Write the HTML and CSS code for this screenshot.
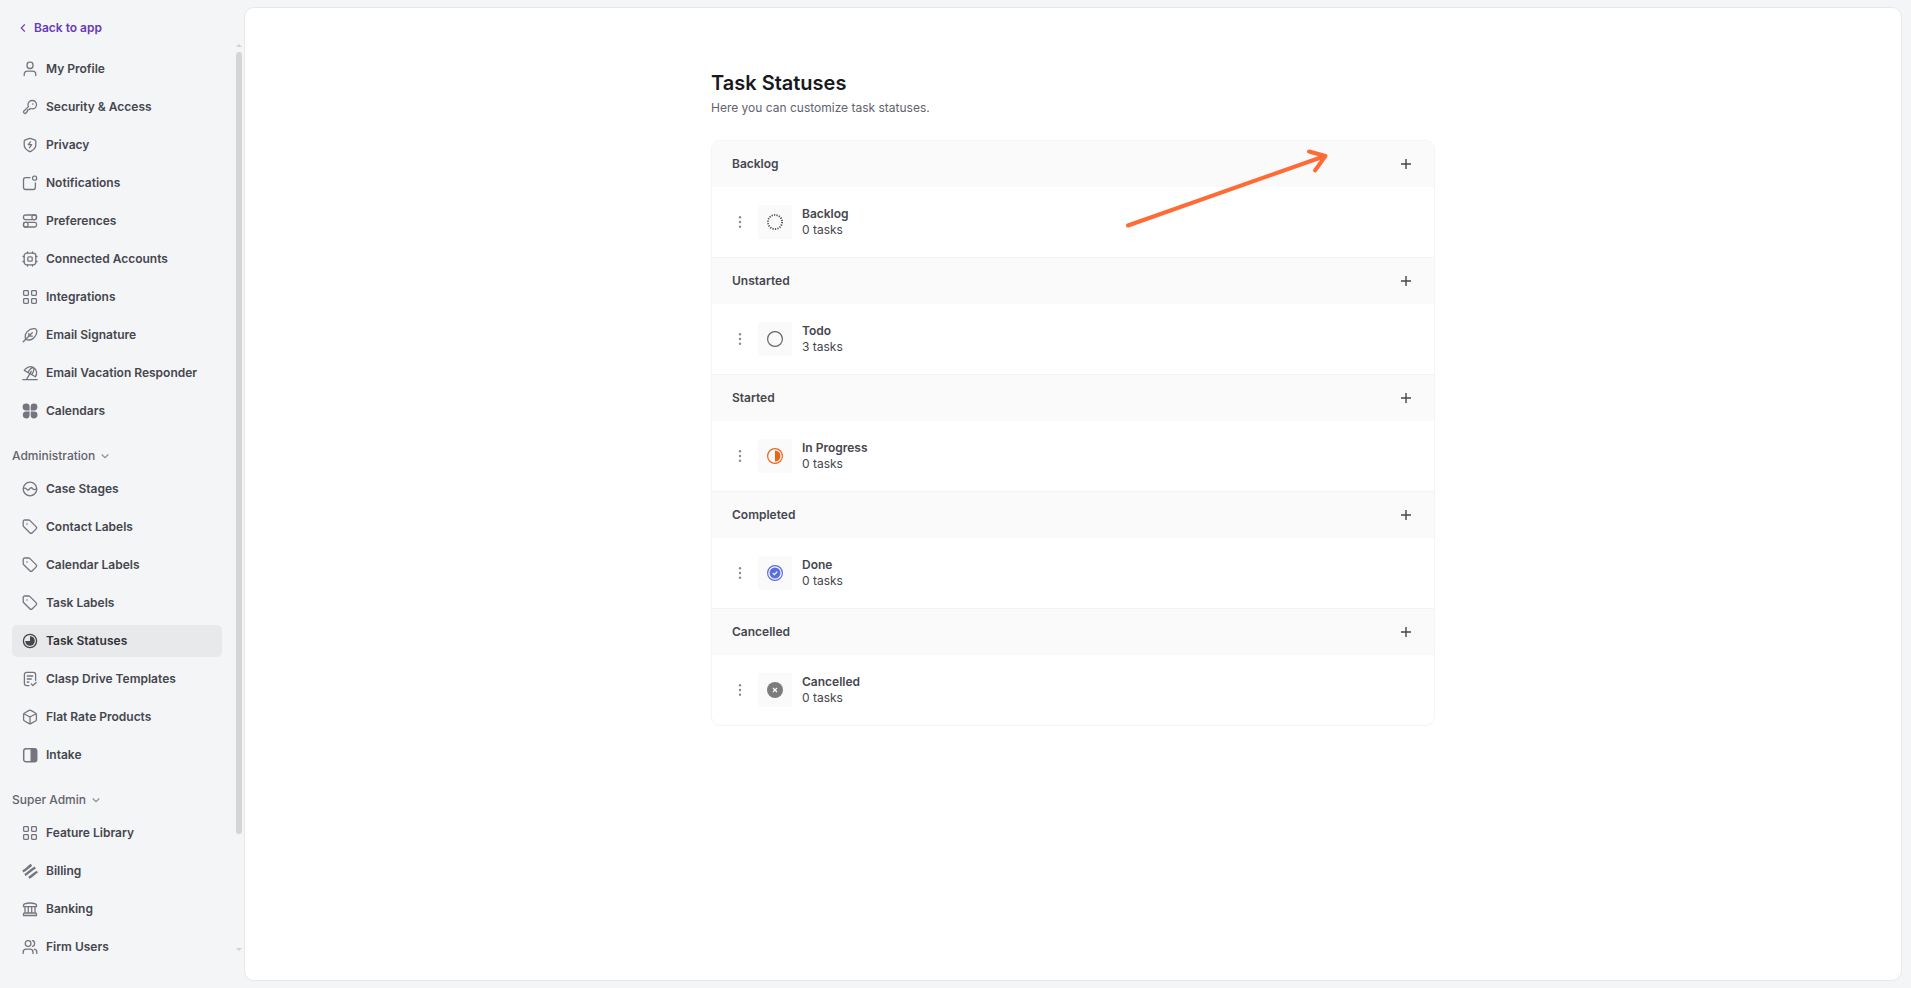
FILE: index.html
```
<!DOCTYPE html>
<html lang="en">
<head>
    <meta charset="UTF-8">
    <meta name="viewport" content="width=device-width, initial-scale=1.0">
    <title>Task Statuses</title>
    <link rel="stylesheet" href="styles.css">
</head>
<body>
    <svg class="sprite" width="0" height="0">
        <symbol id="tag" viewBox="0 0 16 16"><path d="M1.2 2.5v3.900c0 .5.2 1 .6 1.400l6 6c.8.8 1.700.8 2.500 0l3.700-3.700c.8-.8.8-1.700 0-2.500l-6-6C7.600 1.200 7.100 1 6.600 1H2.700c-.9 0-1.500.6-1.500 1.500z"/><path d="M5 5h.01" stroke-width="1.6"/></symbol>
        <symbol id="grid" viewBox="0 0 16 16"><rect x="1.6" y="1.6" width="4.800" height="4.800" rx=".8"/><rect x="9.600" y="1.6" width="4.800" height="4.800" rx=".8"/><rect x="1.6" y="9.600" width="4.800" height="4.800" rx=".8"/><rect x="9.600" y="9.600" width="4.800" height="4.800" rx=".8"/></symbol>
        <symbol id="plus" viewBox="0 0 12 12"><path d="M6 1v10M1 6h10"/></symbol>
        <symbol id="down" viewBox="0 0 8 8"><path d="M.7 2.500L4 5.700l3.300-3.200"/></symbol>
        <symbol id="dots" viewBox="0 0 4 14"><circle cx="2" cy="2.200" r="1.200"/><circle cx="2" cy="7" r="1.200"/><circle cx="2" cy="11.800" r="1.200"/></symbol>
    </svg>

    <aside class="sidebar">
        <a class="back"><svg viewBox="0 0 6 10"><path d="M4.800 1.300L1.300 5l3.500 3.700"/></svg>Back to app</a>

        <nav class="menu">
            <a class="item"><svg class="icon" viewBox="0 0 16 16"><rect x="5" y="1.200" width="6" height="6.300" rx="2.700"/><path d="M2.200 14.600v-1.200c0-2 1.500-3.200 3.400-3.200h4.800c1.900 0 3.400 1.200 3.400 3.200v1.200"/></svg>My Profile</a>
            <a class="item"><svg class="icon" viewBox="0 0 16 16"><path d="M10.200 1.500c2.400 0 4.300 1.800 4.300 4.200 0 2.300-1.900 4.200-4.300 4.200-.7 0-1.300-.1-1.900-.4l-1.200 1.200-1.500.3-.3 1.500-1.600 1.700c-.4.4-.9.4-1.300.1l-.7-.7c-.3-.4-.3-.9 0-1.300l4.800-4.700c-.3-.6-.5-1.200-.5-1.900 0-2.400 1.900-4.200 4.200-4.200z"/><path d="M10.800 5h.01" stroke-width="1.6"/></svg>Security &amp; Access</a>
            <a class="item"><svg class="icon" viewBox="0 0 16 16"><path d="M7 1.600L3.300 2.900c-.7.3-1.100.8-1.100 1.500v3.700c0 3.300 2.600 5 4.900 6.200.6.3 1.200.3 1.800 0 2.300-1.200 4.900-2.900 4.900-6.200V4.400c0-.7-.4-1.200-1.100-1.500L9 1.600c-.7-.2-1.300-.2-2 0z"/><path d="M8.500 4.900L6.300 7.700h3.400L7.500 10.700"/></svg>Privacy</a>
            <a class="item"><svg class="icon" viewBox="0 0 16 16"><rect x="10.600" y="1.200" width="4" height="4" rx="1.500"/><path d="M8 2.600H3.700c-1.300 0-2.200.9-2.200 2.200v7.500c0 1.300.9 2.200 2.200 2.200h7.500c1.300 0 2.200-.9 2.200-2.200V8"/></svg>Notifications</a>
            <a class="item"><svg class="icon" viewBox="0 0 16 16"><rect x="1.500" y="2" width="13" height="4.600" rx="1.800"/><rect x="1.500" y="9.400" width="13" height="4.600" rx="1.800"/><rect x="10" y="2" width="4.500" height="4.600" rx="1.500"/><rect x="1.500" y="9.400" width="4.500" height="4.600" rx="1.500"/></svg>Preferences</a>
            <a class="item"><svg class="icon" viewBox="0 0 16 16"><rect x="2.200" y="2.200" width="11.600" height="11.600" rx="2.500"/><rect x="5.800" y="5.800" width="4.400" height="4.400" rx="1"/><path d="M5.500 2V1M10.500 2V1M5.500 15v-1M10.500 15v-1M2 5.500H1M2 10.500H1M15 5.500h-1M15 10.500h-1"/></svg>Connected Accounts</a>
            <a class="item"><svg class="icon"><use href="#grid"/></svg>Integrations</a>
            <a class="item"><svg class="icon" viewBox="0 0 16 16"><path d="M1.200 14.800L10.300 5.700M3.700 12.300c-.9-2.800-.5-5.600 1.500-7.700 2.500-2.500 5.500-3.400 7.700-2.900 1 .2 1.500.8 1.700 1.700.5 2.200-.4 5.200-2.900 7.600-2.300 2.200-5.200 2.400-8 1.300zM6.800 9.200V6.500M6.800 9.200h3.500"/></svg>Email Signature</a>
            <a class="item"><svg class="icon" viewBox="0 0 16 16"><path d="M.8 14.700h14.400M4.700 14.200l4.600-7.900M2.300 5.400c1.800-3.300 5.900-4.800 9.300-2.800 3.300 1.900 3.900 6.200 1.800 9.200L2.300 5.400zM6 7.500c1.200-2.600 3.300-4.900 5.600-4.900M9.800 9.700c1.600-2.600 2.600-5.300 1.800-7.100"/></svg>Email Vacation Responder</a>
            <a class="item"><svg class="icon solid" viewBox="0 0 16 16"><path d="M4 .6h.4a3.200 3.200 0 0 1 3.200 3.200v3.600H4A3.400 3.400 0 0 1 4 .6zM12 .6a3.400 3.400 0 0 1 0 6.800H8.700V3.800A3.200 3.200 0 0 1 12 .6zM4 8.600h3.600v3.600A3.400 3.400 0 1 1 4 8.600zM8.700 8.600H12a3.400 3.400 0 1 1-3.300 3.600z"/></svg>Calendars</a>
        </nav>

        <div class="group">Administration<svg class="caret"><use href="#down"/></svg></div>
        <nav class="menu">
            <a class="item"><svg class="icon" viewBox="0 0 16 16"><circle cx="8" cy="8" r="6.800"/><path d="M1.500 7.500c1.200-.6 2.400-.4 3.300.8.9 1.100 1.700.8 2.400 0l.8-.9c.8-.9 1.800-.9 2.600.2.9 1.200 2.500 1.100 3.900.1"/></svg>Case Stages</a>
            <a class="item"><svg class="icon"><use href="#tag"/></svg>Contact Labels</a>
            <a class="item"><svg class="icon"><use href="#tag"/></svg>Calendar Labels</a>
            <a class="item"><svg class="icon"><use href="#tag"/></svg>Task Labels</a>
            <a class="item active"><svg class="icon" viewBox="0 0 16 16"><circle cx="8" cy="8" r="6.600"/><path class="fill" d="M8 3.200V8H3.200A4.800 4.800 0 1 0 8 3.200z"/></svg>Task Statuses</a>
            <a class="item"><svg class="icon" viewBox="0 0 16 16"><path d="M7 14.600H4.600c-1.300 0-2.200-.9-2.200-2.200V3.600c0-1.300.9-2.200 2.200-2.200h6.800c1.300 0 2.200.9 2.200 2.200v6M5.300 5h5.400M5.300 8h4M5.300 11h1.500M9.300 13l1.600 1.600 3.300-3"/></svg>Clasp Drive Templates</a>
            <a class="item"><svg class="icon" viewBox="0 0 16 16"><path d="M7.200 1.400L2.500 4c-.6.3-.9.8-.9 1.400v5.200c0 .6.3 1.100.9 1.400l4.700 2.600c.5.3 1.100.3 1.600 0l4.700-2.600c.6-.3.9-.8.9-1.400V5.400c0-.6-.3-1.100-.9-1.400L8.800 1.400c-.5-.3-1.100-.3-1.600 0zM2 4.700L8 8l6-3.300M8 8v6.700"/></svg>Flat Rate Products</a>
            <a class="item"><svg class="icon" viewBox="0 0 16 16"><rect x="1.700" y="1.700" width="13" height="13" rx="2.300" stroke-width="1.500"/><path class="fill" d="M8.500 1.500H13l2 1.500v10.500L13 15H8.500z"/></svg>Intake</a>
        </nav>

        <div class="group">Super Admin<svg class="caret"><use href="#down"/></svg></div>
        <nav class="menu">
            <a class="item"><svg class="icon"><use href="#grid"/></svg>Feature Library</a>
            <a class="item"><svg class="icon thick" viewBox="0 0 16 16"><path d="M.8 8.300C4 7.300 6 3.800 9.500 1.900M2.800 11.900C6.500 10.700 9 6.200 13.300 4.600M6.800 14.700c3.200-1.200 5-4.200 8.600-6"/></svg>Billing</a>
            <a class="item"><svg class="icon" viewBox="0 0 16 16"><path d="M1.500 4.400c0-.8.4-1.200 1.100-1.500 3.500-1.200 7.300-1.200 10.800 0 .7.3 1.100.7 1.100 1.500v1.300h-13zM2.500 12h11c.6 0 1 .5 1 1v1.500h-13V13c0-.5.4-1 1-1zM3 5.800V12M6.300 5.800V12M9.700 5.800V12M13 5.800V12"/></svg>Banking</a>
            <a class="item"><svg class="icon" viewBox="0 0 16 16"><rect x="3.300" y="1.700" width="5.600" height="5.600" rx="2.500"/><path d="M10.500 1.700c1.300.2 2.100 1.200 2.100 2.800s-.8 2.600-2.100 2.800M1.200 14.400v-1.200c0-1.800 1.300-3 3-3H8c1.700 0 3 1.200 3 3v1.200M12.300 10.200c1.500.4 2.500 1.500 2.500 3v1.200"/></svg>Firm Users</a>
        </nav>

        <div class="scrollbar">
            <span class="scroll-up"></span>
            <span class="scroll-thumb"></span>
            <span class="scroll-down"></span>
        </div>
    </aside>

    <main class="panel">
        <div class="content">
            <h1>Task Statuses</h1>
            <p class="subtitle">Here you can customize task statuses.</p>

            <div class="statuses">
                <section>
                    <div class="status-header">Backlog<svg class="plus"><use href="#plus"/></svg></div>
                    <div class="status-row">
                        <svg class="dots"><use href="#dots"/></svg>
                        <div class="status-icon"><svg viewBox="0 0 16 16"><circle cx="8" cy="8" r="7.100" fill="none" stroke="#555" stroke-width="1.800" stroke-dasharray="1.300 1.178"/></svg></div>
                        <div><div class="status-name">Backlog</div><div>0 tasks</div></div>
                    </div>
                </section>
                <section>
                    <div class="status-header">Unstarted<svg class="plus"><use href="#plus"/></svg></div>
                    <div class="status-row">
                        <svg class="dots"><use href="#dots"/></svg>
                        <div class="status-icon"><svg viewBox="0 0 16 16"><circle cx="8" cy="8" r="7.400" fill="none" stroke="#666" stroke-width="1.200"/></svg></div>
                        <div><div class="status-name">Todo</div><div>3 tasks</div></div>
                    </div>
                </section>
                <section>
                    <div class="status-header">Started<svg class="plus"><use href="#plus"/></svg></div>
                    <div class="status-row">
                        <svg class="dots"><use href="#dots"/></svg>
                        <div class="status-icon"><svg viewBox="0 0 16 16"><circle cx="8" cy="8" r="7.400" fill="none" stroke="#ec641c" stroke-width="1.200"/><path d="M8 2.500a5.500 5.500 0 0 1 0 11z" fill="#ec641c"/></svg></div>
                        <div><div class="status-name">In Progress</div><div>0 tasks</div></div>
                    </div>
                </section>
                <section>
                    <div class="status-header">Completed<svg class="plus"><use href="#plus"/></svg></div>
                    <div class="status-row">
                        <svg class="dots"><use href="#dots"/></svg>
                        <div class="status-icon"><svg viewBox="0 0 16 16"><circle cx="8" cy="8" r="7.400" fill="none" stroke="#5b6ee1" stroke-width="1.200"/><circle cx="8" cy="8" r="5.500" fill="#5b6ee1"/><path d="M5.800 8.100l1.500 1.500 3-3" fill="none" stroke="#fff" stroke-width="1.200"/></svg></div>
                        <div><div class="status-name">Done</div><div>0 tasks</div></div>
                    </div>
                </section>
                <section>
                    <div class="status-header">Cancelled<svg class="plus"><use href="#plus"/></svg></div>
                    <div class="status-row">
                        <svg class="dots"><use href="#dots"/></svg>
                        <div class="status-icon"><svg viewBox="0 0 16 16"><circle cx="8" cy="8" r="8" fill="#7c7c7c"/><path d="M6 6l4 4M10 6l-4 4" stroke="#fff" stroke-width="1.100"/></svg></div>
                        <div><div class="status-name">Cancelled</div><div>0 tasks</div></div>
                    </div>
                </section>

                <svg class="arrow" viewBox="0 0 208 84"><path d="M5 77.500L202 8M186 3.500L202.500 8 192 22.500"/></svg>
            </div>
        </div>
    </main>
</body>
</html>
```
FILE: styles.css
```
* {
    margin: 0;
    padding: 0;
    box-sizing: border-box;
}

body {
    font-family: Inter, "Liberation Sans", sans-serif;
    font-size: 12px;
    line-height: 16px;
    background: #f4f5f7;
    color: #45464e;
    height: 100vh;
    display: flex;
    overflow: hidden;
}

.sprite {
    position: absolute;
}

.sidebar {
    position: relative;
    width: 244px;
    flex: none;
    padding: 18px 22px 0 12px;
    overflow: hidden;
}

.back {
    display: flex;
    align-items: center;
    gap: 8px;
    height: 20px;
    padding-left: 8px;
    margin-bottom: 15px;
    color: #673ab7;
    font-weight: 600;
}

.back svg {
    width: 6px;
    height: 10px;
    fill: none;
    stroke: currentColor;
    stroke-width: 1.2;
}

.menu {
    display: flex;
    flex-direction: column;
    gap: 6px;
}

.item {
    display: flex;
    align-items: center;
    gap: 8px;
    width: 210px;
    height: 32px;
    padding-left: 10px;
    border-radius: 5px;
    font-weight: 600;
}

.item.active {
    background: #e8e9ea;
    color: #303138;
}

.icon {
    width: 16px;
    height: 16px;
    flex: none;
    fill: none;
    color: #74757e;
    stroke: currentColor;
    stroke-width: 1.3;
    stroke-linecap: round;
    stroke-linejoin: round;
}

.icon .fill,
.icon.solid {
    fill: currentColor;
    stroke: none;
}

.icon.thick {
    stroke-width: 2.4;
    stroke-linecap: butt;
}

.active .icon {
    color: #45464e;
}

.group {
    display: flex;
    align-items: center;
    gap: 6px;
    height: 20px;
    margin: 19px 0 7px;
    color: #62636c;
    font-weight: 500;
}

.caret {
    width: 8px;
    height: 8px;
    fill: none;
    stroke: #8f9097;
    stroke-width: 1.3;
}

.scrollbar {
    position: absolute;
    top: 44px;
    right: 2px;
    bottom: 37px;
    width: 6px;
    display: flex;
    flex-direction: column;
}

.scroll-up,
.scroll-down {
    border: 3px solid transparent;
}

.scroll-up {
    border-top: 0;
    border-bottom-color: #d2d3d5;
    margin-bottom: 5px;
}

.scroll-down {
    border-bottom: 0;
    border-top-color: #d2d3d5;
    margin-top: auto;
}

.scroll-thumb {
    height: 782px;
    border-radius: 3px;
    background: #d4d5d6;
}

.panel {
    flex: 1;
    margin: 7px 9px 7px 0;
    background: #fff;
    border: 1px solid #e7e8ea;
    border-radius: 10px;
}

.content {
    width: 724px;
    margin: 0 auto;
    padding-top: 62px;
}

h1 {
    color: #18191d;
    font-size: 20px;
    font-weight: 600;
    line-height: 26px;
}

.subtitle {
    margin: 3px 0 23px;
    line-height: 18px;
    color: #62636c;
}

.statuses {
    position: relative;
    border: 1px solid #f4f4f5;
    border-radius: 9px;
}

.status-header {
    display: flex;
    align-items: center;
    justify-content: space-between;
    height: 47px;
    padding: 0 22px 0 20px;
    background: #fafafa;
    border-top: 1px solid #f3f3f4;
    font-weight: 600;
}

section:first-child .status-header {
    height: 46px;
    border-top: 0;
    border-radius: 8px 8px 0 0;
}

.plus {
    width: 12px;
    height: 12px;
    stroke: #45464e;
    stroke-width: 1.4;
}

.status-row {
    display: flex;
    align-items: center;
    height: 70px;
    padding-left: 26px;
}

.dots {
    width: 4px;
    height: 14px;
    fill: #8b8c92;
}

.status-icon {
    display: flex;
    align-items: center;
    justify-content: center;
    width: 34px;
    height: 34px;
    margin: 0 10px 0 16px;
    border-radius: 2px;
    background: #fafafa;
}

.status-icon svg {
    width: 16px;
    height: 16px;
}

.status-name {
    font-weight: 600;
}

.arrow {
    position: absolute;
    top: 7px;
    left: 411px;
    width: 208px;
    height: 84px;
    fill: none;
    stroke: #ff6b35;
    stroke-width: 4;
    stroke-linecap: round;
    stroke-linejoin: round;
}
```
